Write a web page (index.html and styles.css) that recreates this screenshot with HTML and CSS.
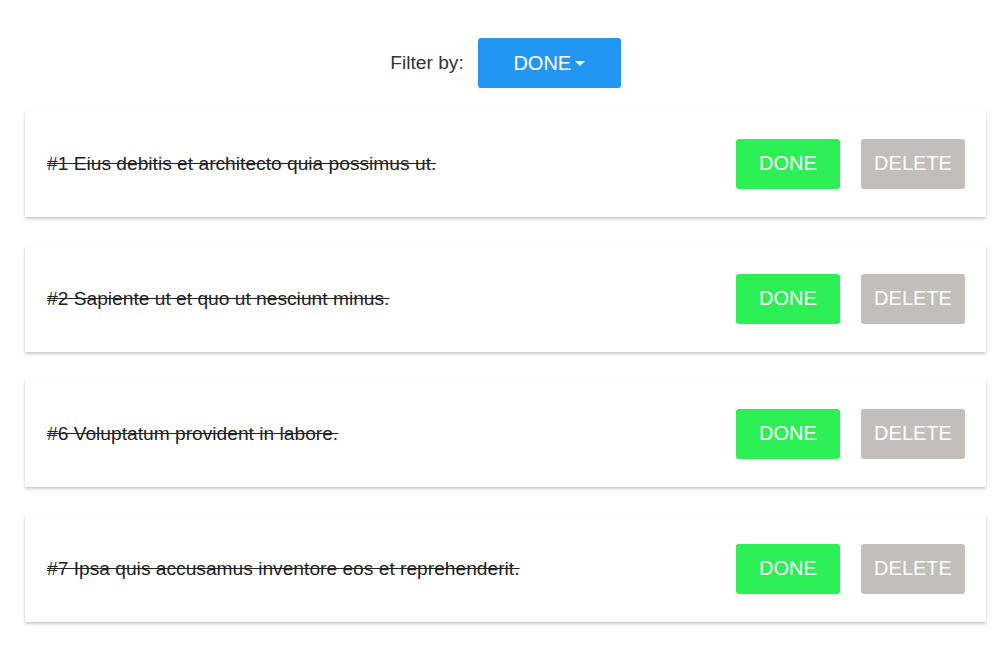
FILE: index.html
```html
<!DOCTYPE html>
<html>
<head>
<meta charset="utf-8">
<link rel="stylesheet" href="styles.css">
</head>
<body>
<div class="app">
  <div class="filter">
    <span class="filter-label">Filter by:</span>
    <button class="btn btn-blue">DONE<span class="caret"></span></button>
  </div>
  <ul class="list">
    <li class="card">
      <span class="todo">#1 Eius debitis et architecto quia possimus ut.</span>
      <div class="actions"><button class="btn btn-green">DONE</button><button class="btn btn-gray">DELETE</button></div>
    </li>
    <li class="card">
      <span class="todo">#2 Sapiente ut et quo ut nesciunt minus.</span>
      <div class="actions"><button class="btn btn-green">DONE</button><button class="btn btn-gray">DELETE</button></div>
    </li>
    <li class="card">
      <span class="todo">#6 Voluptatum provident in labore.</span>
      <div class="actions"><button class="btn btn-green">DONE</button><button class="btn btn-gray">DELETE</button></div>
    </li>
    <li class="card">
      <span class="todo">#7 Ipsa quis accusamus inventore eos et reprehenderit.</span>
      <div class="actions"><button class="btn btn-green">DONE</button><button class="btn btn-gray">DELETE</button></div>
    </li>
  </ul>
</div>
</body>
</html>
```

FILE: styles.css
```css
* { box-sizing: border-box; }
html, body { margin: 0; padding: 0; background: #fff; }
body { font-family: "Liberation Sans", Arial, sans-serif; color: #222; }
.app { padding: 38px 16px 25px 25px; }
.filter { display: flex; align-items: center; justify-content: center; gap: 14px; height: 50px; margin-bottom: 22px; }
.filter-label { font-size: 19.2px; color: #333; }
.btn { border: none; border-radius: 3px; font-family: inherit; font-size: 20px; color: #fff; height: 50px; cursor: pointer; padding: 0; }
.btn-blue { background: #2196f3; width: 143px; display: flex; align-items: center; justify-content: center; }
.caret { display: inline-block; width: 0; height: 0; margin-left: 4px; border-left: 5px solid transparent; border-right: 5px solid transparent; border-top: 5px solid #fff; }
.list { list-style: none; margin: 0; padding: 0; display: flex; flex-direction: column; gap: 28px; }
.card { display: flex; align-items: center; justify-content: space-between; height: 107px; padding: 0 21px 0 22px; background: #fff; box-shadow: 0 0 1px rgba(0,0,0,0.12), 0 2px 3px rgba(0,0,0,0.2); }
.todo { font-size: 19.2px; text-decoration: line-through; color: #222; }
.actions { display: flex; gap: 21px; }
.btn-green { background: #2bef55; width: 104px; }
.btn-gray { background: #c2bebc; width: 104px; }
```
